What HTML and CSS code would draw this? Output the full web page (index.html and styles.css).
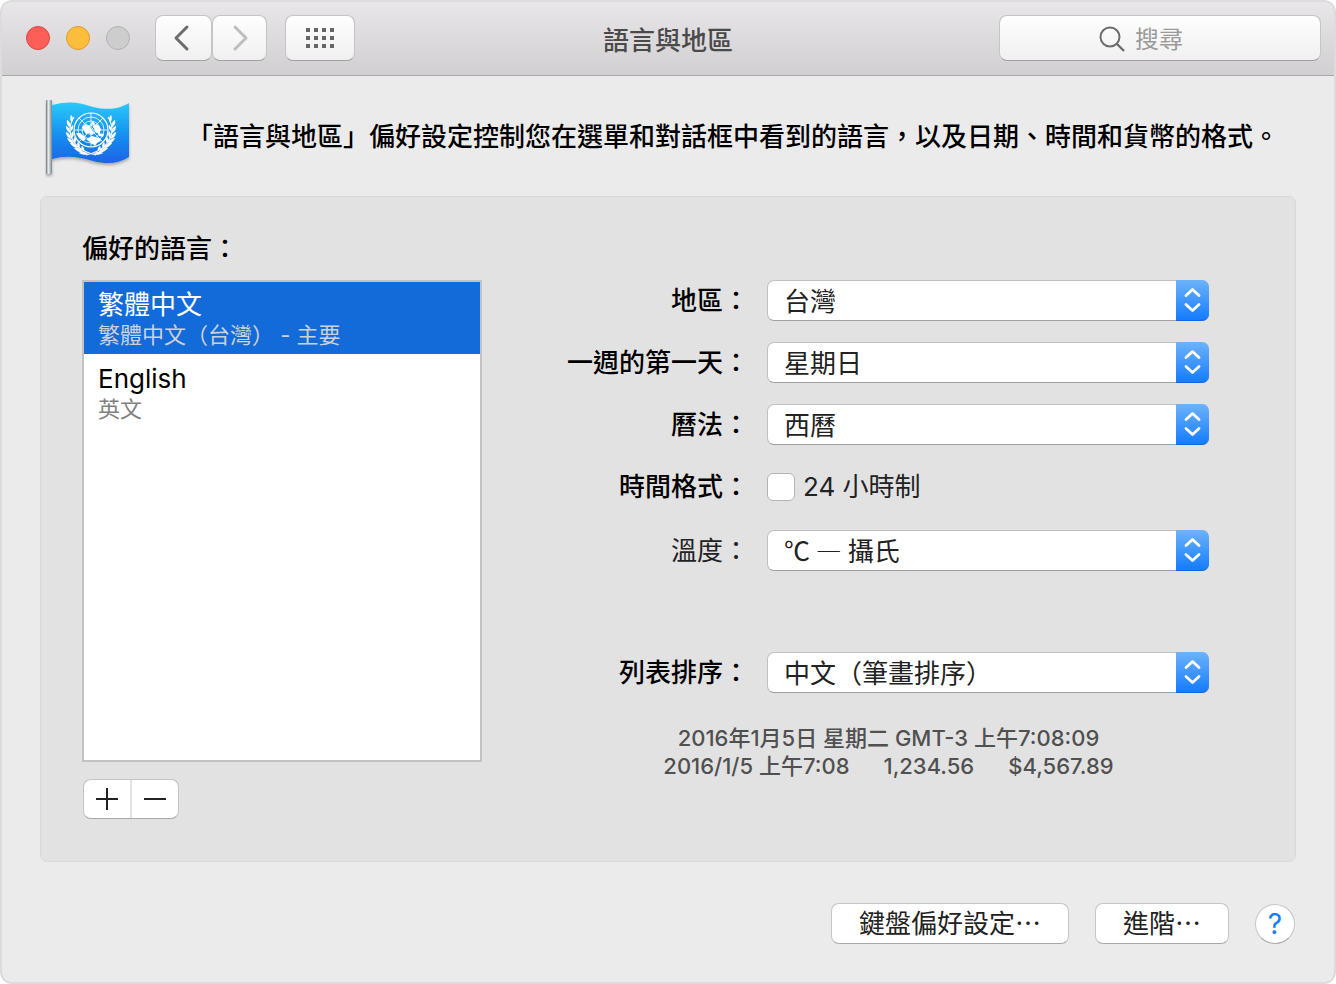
FILE: index.html
```html
<!DOCTYPE html>
<html lang="zh-Hant">
<head>
<meta charset="utf-8">
<title>語言與地區</title>
<link rel="stylesheet" href="styles.css">
</head>
<body>
<svg class="defs" width="0" height="0" aria-hidden="true">
  <symbol id="stepper" viewBox="0 0 33 40"><path d="M10 15.500 16.500 9.500 23 15.500M10 24.500 16.500 30.500 23 24.500" fill="none" stroke="#fff" stroke-width="2.800" stroke-linecap="round" stroke-linejoin="round"/></symbol>
</svg>
<div class="window">
  <header class="titlebar">
    <div class="tools">
      <div class="lights">
        <button class="light close" aria-label="關閉"></button>
        <button class="light minimize" aria-label="縮到最小"></button>
        <button class="light zoom" aria-label="縮放" disabled></button>
      </div>
      <div class="nav">
        <button class="tool back" aria-label="返回"><svg width="28" height="30" viewBox="0 0 28 30"><path d="M17 4 6 15 17 26" fill="none" stroke="#6c6c6c" stroke-width="3" stroke-linecap="round" stroke-linejoin="round"/></svg></button>
        <button class="tool forward" aria-label="往前" disabled><svg width="28" height="30" viewBox="0 0 28 30"><path d="M9 4 20 15 9 26" fill="none" stroke="#bebebe" stroke-width="3" stroke-linecap="round" stroke-linejoin="round"/></svg></button>
      </div>
      <button class="tool all" aria-label="顯示全部"><svg width="28" height="20" viewBox="0 0 28 20" fill="#666"><path d="M0 0h4v4H0zM8 0h4v4H8zM16 0h4v4h-4zM24 0h4v4h-4zM0 8h4v4H0zM8 8h4v4H8zM16 8h4v4h-4zM24 8h4v4h-4zM0 16h4v4H0zM8 16h4v4H8zM16 16h4v4h-4zM24 16h4v4h-4z"/></svg></button>
    </div>
    <h1 class="title">語言與地區</h1>
    <div class="search">
      <svg class="search-icon" width="28" height="28" viewBox="0 0 28 28" fill="none" stroke="#6c6c6c" stroke-width="2"><circle cx="12" cy="12" r="9.500"/><path d="M18.500 18.500 26 26" stroke-width="2.400"/></svg>
      <input class="search-input" type="text" placeholder="搜尋" aria-label="搜尋">
    </div>
  </header>

  <main class="content">
    <div class="intro">
      <svg class="flag" width="88" height="80" viewBox="0 0 88 80" aria-hidden="true">
        <defs>
          <linearGradient id="cloth" x1="0" y1="0" x2="0" y2="1"><stop offset="0" stop-color="#2bc9fb"/><stop offset=".5" stop-color="#1694ef"/><stop offset="1" stop-color="#1c62e6"/></linearGradient>
          <linearGradient id="pole" x1="0" y1="0" x2="1" y2="0"><stop offset="0" stop-color="#6f7a80"/><stop offset=".4" stop-color="#e8eff2"/><stop offset="1" stop-color="#77838a"/></linearGradient>
          <filter id="shade" x="-10%" y="-10%" width="120%" height="130%"><feDropShadow dx="0" dy="2" stdDeviation="1.500" flood-opacity=".3"/></filter>
          <g id="laurel">
            <path d="M5 25C-10 22-20 13-21 1-21-6-19-10-17-13"/>
            <path d="M-19-8q-3-2-1-7 3 3 1 7M-21-3q-4-2-3-7 4 2 3 7M-21 3q-4-2-4-7 5 2 4 7M-20 9q-5-2-5-7 5 2 5 7M-17 14q-5-1-7-6 6 1 7 6M-13 18q-5 0-8-5 6 0 8 5M-8 22q-5 1-9-4 6-1 9 4M-3 24q-4 2-9-1 5-3 9 1M-20 1q3-3 2-6-3 2-2 6M-19 8q3-3 1-7-3 3-1 7M-16 13q2-3 0-6-3 2 0 6M-12 18q2-3-1-6-2 3 1 6M-7 21q1-3-2-5-2 3 2 5" fill="#fff" stroke-width=".2"/>
          </g>
        </defs>
        <g filter="url(#shade)">
          <path d="M7 5C26 0 35 3 48 7 64 11 76 8 84 3V57C75 63 63 65 48 61 34 57 22 55 7 59Z" fill="url(#cloth)"/>
          <rect x="1" y="0" width="6" height="74" rx="1" fill="url(#pole)"/>
        </g>
        <g transform="translate(46 30)" fill="none" stroke="#fff" stroke-width="1.200">
          <circle r="17"/><circle r="13" stroke-width=".8"/><circle r="9" stroke-width=".8"/><circle r="4.500" stroke-width=".8"/>
          <path d="M0-17V17M-17 0H17M-12-12 12 12M12-12-12 12" stroke-width=".8"/>
          <path d="M-9-3-5-6-1-4 0-1 3 2 1 5-2 3-5 4-7 1ZM2-6 7-5 10-1 8 4 4 2ZM-15 3-11 3-7 6-5 9-8 11-12 8ZM-5 9 1 6 8 8 10 11 6 13 4 16 0 13ZM7 3 13 4 12 7 8 6ZM-1-5 2-9 4-6Z" fill="#fff" stroke="none"/>
          <use href="#laurel"/><use href="#laurel" transform="scale(-1 1)"/>
        </g>
      </svg>
      <p class="intro-text">「語言與地區」偏好設定控制您在選單和對話框中看到的語言，以及日期、時間和貨幣的格式。</p>
    </div>

    <div class="panel">
      <section class="languages">
        <h2 class="heading" id="pref">偏好的語言：</h2>
        <ul class="list" role="listbox" aria-labelledby="pref">
          <li class="item selected" role="option" aria-selected="true"><span class="name">繁體中文</span><span class="detail">繁體中文（台灣） - 主要</span></li>
          <li class="item" role="option" aria-selected="false"><span class="name">English</span><span class="detail">英文</span></li>
        </ul>
        <div class="segments">
          <button class="segment" aria-label="加入"><svg width="22" height="22"><path d="M11 0V22M0 11H22" stroke="#222" stroke-width="2"/></svg></button>
          <button class="segment" aria-label="移除"><svg width="22" height="22"><path d="M0 11H22" stroke="#222" stroke-width="2"/></svg></button>
        </div>
      </section>

      <form class="settings">
        <div class="row"><label class="label" for="region">地區：</label>
          <div class="popup"><select class="select" id="region"><option>台灣</option></select><svg class="arrows"><use href="#stepper"/></svg></div></div>
        <div class="row"><label class="label" for="first">一週的第一天：</label>
          <div class="popup"><select class="select" id="first"><option>星期日</option></select><svg class="arrows"><use href="#stepper"/></svg></div></div>
        <div class="row"><label class="label" for="calendar">曆法：</label>
          <div class="popup"><select class="select" id="calendar"><option>西曆</option></select><svg class="arrows"><use href="#stepper"/></svg></div></div>
        <div class="row time"><span class="label">時間格式：</span>
          <label class="check"><input class="box" type="checkbox">24 小時制</label></div>
        <div class="row"><label class="label soft" for="temp">溫度：</label>
          <div class="popup"><select class="select" id="temp"><option>℃ — 攝氏</option></select><svg class="arrows"><use href="#stepper"/></svg></div></div>
        <div class="row sort"><label class="label" for="sort">列表排序：</label>
          <div class="popup"><select class="select" id="sort"><option>中文（筆畫排序）</option></select><svg class="arrows"><use href="#stepper"/></svg></div></div>
        <div class="preview">
          <p class="line">2016年1月5日 星期二 GMT-3 上午7:08:09</p>
          <p class="line samples"><span>2016/1/5 上午7:08</span><span>1,234.56</span><span>$4,567.89</span></p>
        </div>
      </form>
    </div>

    <footer class="footer">
      <button class="push">鍵盤偏好設定⋯</button>
      <button class="push">進階⋯</button>
      <button class="help" aria-label="輔助說明">?</button>
    </footer>
  </main>
</div>
</body>
</html>
```

FILE: styles.css
```css
* { box-sizing: border-box; }
body {
  margin: 0;
  background: #fff;
  color: #000;
  font: 26px/38px Inter, "Noto Sans CJK TC", sans-serif;
}
button, input, select { font: inherit; color: inherit; margin: 0; }
button { padding: 0; display: flex; align-items: center; justify-content: center; }
h1, h2, p, ul { margin: 0; padding: 0; font-weight: 400; font-size: inherit; }
.defs { position: absolute; }

.window {
  min-height: 100vh;
  border: 2px solid #dcdcdc;
  border-radius: 12px;
  background: #ebebeb;
  overflow: hidden;
}

.titlebar {
  display: grid;
  grid-template-columns: 1fr auto 1fr;
  align-items: center;
  height: 74px;
  padding: 0 13px 2px;
  background: linear-gradient(#e8e6e8, #d1cfd1);
  border-bottom: 1px solid #a9a7a9;
}
.tools { display: flex; align-items: center; padding-left: 11px; }
.lights { display: flex; gap: 16px; margin-right: 25px; }
.light { width: 24px; height: 24px; border-radius: 50%; border: 1px solid; }
.close { background: #fd5e58; border-color: #e0443f; }
.minimize { background: #fdbd3c; border-color: #dd9c2b; }
.zoom { background: #cecdce; border-color: #b4b3b4; }
.nav { display: flex; margin-right: 18px; }
.tool {
  height: 46px;
  border: 1px solid #c6c4c6;
  border-bottom-color: #a3a1a3;
  border-radius: 8px;
  background: linear-gradient(#fefefe, #f0f0f0);
}
.back { width: 57px; }
.forward { width: 55px; }
.all { width: 70px; }
.title { color: #4b4a4b; padding-top: 6px; font-weight: 500; }
.search { position: relative; justify-self: end; width: 322px; }
.search-icon { position: absolute; left: 99px; top: 10px; }
.search-input {
  display: block;
  width: 100%;
  height: 46px;
  padding: 3px 10px 0 135px;
  border: 1px solid #c6c4c6;
  border-bottom-color: #a3a1a3;
  border-radius: 8px;
  background: linear-gradient(#fefefe, #f0f0f0);
  font-size: 24px;
}
.search-input::placeholder { color: #9b9b9b; opacity: 1; }

.content { padding: 24px 38px 36px; }
.intro { display: flex; align-items: flex-start; gap: 54px; padding-left: 5px; height: 96px; }
.flag { flex: none; }
.intro-text { padding-top: 18px; white-space: nowrap; font-weight: 500; }

.panel {
  display: flex;
  padding: 33px 86px 41px 41px;
  background: #e2e2e2;
  border: 1px solid #d8d8d8;
  border-radius: 7px;
}
.languages { flex: none; width: 400px; }
.heading { margin-bottom: 12px; font-weight: 500; }
.list {
  height: 482px;
  border: 2px solid #c2c2c2;
  background: #fff;
  list-style: none;
  display: flex;
  flex-direction: column;
  gap: 2px;
}
.item { padding: 8px 14px 4px; line-height: 30px; }
.name, .detail { display: block; }
.detail { font-size: 22px; color: #808080; }
.selected { background: #126bd8; color: #fff; }
.selected .detail { color: #cfd0d4; }
.segments {
  display: flex;
  width: 96px;
  height: 40px;
  margin: 17px 0 1px 1px;
  border: 1px solid #c4c4c4;
  border-bottom-color: #a8a8a8;
  border-radius: 8px;
  background: #fff;
}
.segment { flex: 1; border: 0; background: none; }
.segment + .segment { border-left: 2px solid #e2e2e2; }

.settings { flex: 1; padding-top: 50px; display: flex; flex-direction: column; gap: 21px; }
.row {
  display: grid;
  grid-template-columns: 267px 1fr;
  column-gap: 18px;
  align-items: center;
  height: 41px;
}
.time { height: 43px; padding-bottom: 2px; }
.sort { margin-top: 60px; }
.label { text-align: right; font-weight: 500; }
.soft { color: #222; font-weight: 400; }
.popup { position: relative; }
.select {
  display: block;
  appearance: none;
  width: 100%;
  height: 41px;
  padding: 0 50px 3px 16px;
  border: 1px solid #c0c0c0;
  border-bottom-color: #a0a0a0;
  border-radius: 7px;
  background: #fff;
  color: #222;
  font-family: "Noto Sans CJK TC", sans-serif;
}
.arrows {
  position: absolute;
  top: 0;
  right: 0;
  width: 33px;
  height: 41px;
  border-radius: 0 7px 7px 0;
  background: linear-gradient(#6db3fa, #147cfe);
  border-bottom: 1px solid #1068e8;
  pointer-events: none;
}
.check { display: flex; align-items: center; gap: 8px; color: #222; }
.box {
  appearance: none;
  width: 28px;
  height: 28px;
  border: 1px solid #b4b4b4;
  border-radius: 6px;
  background: #fff;
}
.preview { margin: 10px 0 0 86px; color: #505050; font-size: 22px; line-height: 28px; text-align: center; }
.line { font-weight: 500; }
.samples { display: flex; justify-content: center; gap: 34px; }

.footer { display: flex; justify-content: flex-end; align-items: center; gap: 26px; margin-top: 41px; padding-right: 1px; }
.push {
  height: 41px;
  padding: 0 27px 3px;
  border: 1px solid #c6c6c6;
  border-bottom-color: #a8a8a8;
  border-radius: 8px;
  background: #fff;
  color: #222;
  font-family: "Noto Sans CJK TC", sans-serif;
}
.help {
  width: 40px;
  height: 40px;
  border: 1px solid #c6c6c6;
  border-bottom-color: #a8a8a8;
  border-radius: 50%;
  background: #fff;
  color: #147cfe;
  font-size: 28px;
}
```
